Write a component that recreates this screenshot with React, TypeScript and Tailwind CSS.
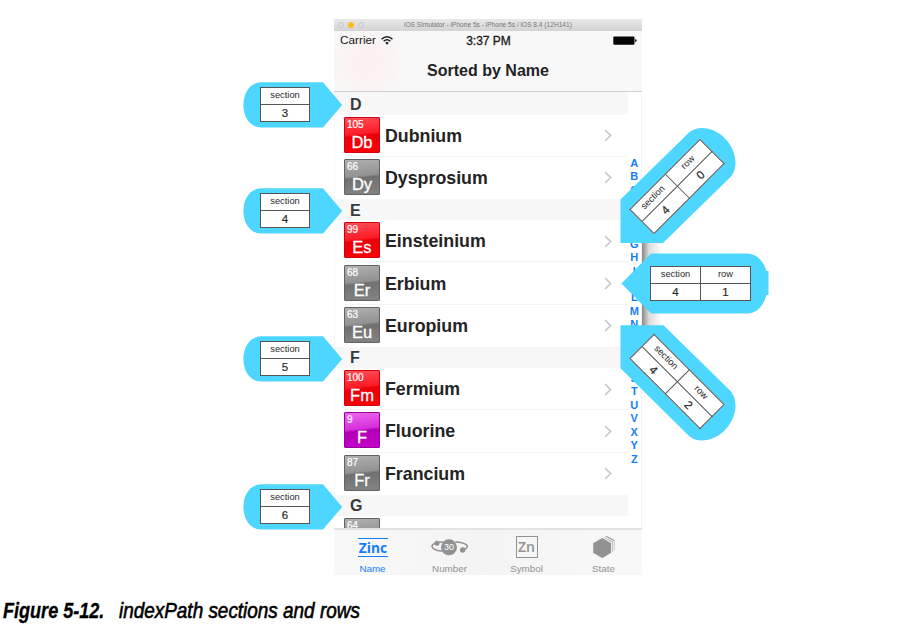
import React from "react";

type Tone = "red" | "gray" | "purple";
type Element = { n: number; sym: string; name: string; tone: Tone };
type Section = { letter: string; rows: Element[] };

const sections: Section[] = [
  {
    letter: "D",
    rows: [
      { n: 105, sym: "Db", name: "Dubnium", tone: "red" },
      { n: 66, sym: "Dy", name: "Dysprosium", tone: "gray" },
    ],
  },
  {
    letter: "E",
    rows: [
      { n: 99, sym: "Es", name: "Einsteinium", tone: "red" },
      { n: 68, sym: "Er", name: "Erbium", tone: "gray" },
      { n: 63, sym: "Eu", name: "Europium", tone: "gray" },
    ],
  },
  {
    letter: "F",
    rows: [
      { n: 100, sym: "Fm", name: "Fermium", tone: "red" },
      { n: 9, sym: "F", name: "Fluorine", tone: "purple" },
      { n: 87, sym: "Fr", name: "Francium", tone: "gray" },
    ],
  },
  { letter: "G", rows: [{ n: 64, sym: "", name: "", tone: "gray" }] },
];

const tones: Record<Tone, string> = {
  red: "border-[#d0000c] bg-[linear-gradient(174deg,#ff5058_0%,#fb1c26_46%,#ea000a_52%,#ff0008_100%)]",
  gray: "border-[#636363] bg-[linear-gradient(174deg,#b0b0b0_0%,#929292_46%,#707070_52%,#848484_100%)]",
  purple: "border-[#93009a] bg-[linear-gradient(174deg,#ec66ee_0%,#d630da_46%,#b000b6_52%,#c600cc_100%)]",
};

const letters = "ABCDEFGHIKLMNOPRSTUVXYZ".split("");

function Tile({ n, sym, tone }: Element) {
  return (
    <div className={`h-[36px] w-[36px] shrink-0 rounded-[1px] border text-white ${tones[tone]}`}>
      <div className="pl-[2px] text-[10px] leading-[14px] [-webkit-text-stroke:0.2px_white]">{n}</div>
      <div className="text-center text-[16.5px] leading-[20px] [-webkit-text-stroke:0.3px_white]">{sym}</div>
    </div>
  );
}

function Row({ item, last }: { item: Element; last: boolean }) {
  return (
    <div className="relative flex h-[42.2px] items-center pl-[9px] pr-[16px]">
      <div className="-mt-[2px]">
        <Tile {...item} />
      </div>
      <span className="ml-[5px] flex-1 text-[17.8px] leading-[22px] font-bold text-[#242424]">{item.name}</span>
      <svg width="8" height="13" viewBox="0 0 8 13" fill="none" stroke="#c8c8cc" strokeWidth="1.7">
        <path d="M1 1 L6.6 6.5 L1 12" />
      </svg>
      {!last && <div className="absolute bottom-0 left-[10px] right-0 h-px bg-[#f4f4f4]" />}
    </div>
  );
}

function Table({ head, body }: { head: string[]; body: string[] }) {
  return (
    <div className="flex border-l border-t border-[#555] bg-white text-[#2a2a2a]">
      {head.map((h, i) => (
        <div key={h} className="flex flex-1 flex-col">
          <div className="flex h-[17px] items-center justify-center border-b border-r border-[#555] text-[9.3px] leading-none">
            {h}
          </div>
          <div className="flex h-[17px] items-center justify-center border-b border-r border-[#555] pt-[2px] text-[11.5px] leading-none [-webkit-text-stroke:0.2px_#2a2a2a]">
            {body[i]}
          </div>
        </div>
      ))}
    </div>
  );
}

function SectionCallout({ place, value }: { place: string; value: string }) {
  return (
    <div className={`absolute left-[243px] h-[46px] w-[100px] ${place}`}>
      <svg className="absolute inset-0" width="100" height="46" viewBox="0 0 100 46">
        <path d="M18 .3 H80 L99.2 22.9 L80 45.6 H18 C6 45 .4 34 .4 23 C.4 12 6 1 18 .3Z" fill="#4dd6ff" />
      </svg>
      <div className="relative ml-[17px] mt-[5px] w-[50px]">
        <Table head={["section"]} body={[value]} />
      </div>
    </div>
  );
}

function TabItem({ label, active, children }: { label: string; active?: boolean; children: React.ReactNode }) {
  return (
    <div className={`flex w-[77px] flex-col items-center pt-[5px] ${active ? "text-[#147dfb]" : "text-[#929292]"}`}>
      <div className="flex h-[24px] items-center">{children}</div>
      <div className="mt-[4px] text-[9.8px] leading-[11px]">{label}</div>
    </div>
  );
}

export default function App() {
  return (
    <div className="relative h-[628px] w-[902px] overflow-hidden bg-white pt-[19px] font-['Liberation_Sans',Arial,sans-serif]">
      {/* Simulator window */}
      <div className="ml-[334px] flex h-[556px] w-[308px] flex-col">
        <div className="flex h-[12px] items-center bg-linear-to-b from-[#e9e9e9] to-[#d3d3d3] pl-[4px]">
          <div className="flex gap-[4px]">
            <div className="size-[6px] rounded-full border border-[#c9c9c9] bg-[#dedede]" />
            <div className="size-[6px] rounded-full bg-[#fdbc1e]" />
            <div className="size-[6px] rounded-full border border-[#c9c9c9] bg-[#dedede]" />
          </div>
          <div className="ml-[40px] whitespace-nowrap text-[6.6px] leading-[12px] text-[#767676]">
            iOS Simulator - iPhone 5s - iPhone 5s / iOS 8.4 (12H141)
          </div>
        </div>

        <div className="h-[61px] shrink-0 border-b border-[#cfcfcf] bg-[#f8f8f8] bg-[radial-gradient(circle_at_33px_32px,#fcefee_0px,#faf3f3_22px,#f8f8f8_42px)]">
          <div className="grid h-[19px] grid-cols-3 items-center pl-[6px] pr-[5px] text-[#1a1a1a]">
            <div className="flex items-center gap-[5px] text-[11.8px] leading-none">
              Carrier
              <svg width="12" height="9" viewBox="0 0 12 9" fill="none" stroke="#1a1a1a" strokeWidth="1.5">
                <path d="M.5 3.2 Q6 -1.6 11.5 3.2" />
                <path d="M2.6 5.3 Q6 2.2 9.4 5.3" />
                <path d="M4.2 6.7 Q6 5.2 7.8 6.7 L6 8.8Z" fill="#1a1a1a" stroke="none" />
              </svg>
            </div>
            <div className="whitespace-nowrap text-center text-[12px] leading-none [-webkit-text-stroke:0.3px_#1a1a1a]">
              3:37 PM
            </div>
            <svg className="justify-self-end" width="24" height="9" viewBox="0 0 24 9">
              <rect x=".3" y=".4" width="21.2" height="8.4" rx="1.2" fill="#050505" />
              <path d="M22.2 3 Q23.6 3.4 23.6 4.6 Q23.6 5.8 22.2 6.2Z" fill="#050505" />
            </svg>
          </div>
          <div className="pt-[11px] text-center text-[16px] leading-[20px] font-bold text-[#242424]">Sorted by Name</div>
        </div>

        <div className="flex min-h-0 flex-1 overflow-hidden border-r border-[#f3f3f3]">
          <div className="w-[293.5px] shrink-0 border-l border-[#f7f7f7]">
            {sections.map((s) => (
              <div key={s.letter}>
                <div
                  className={`flex items-center bg-[#f7f7f7] pl-[15px] text-[16px] leading-none font-bold text-[#3a3a3a] ${s.letter === "D" ? "h-[22.6px] pt-[3px]" : "h-[21.3px] pt-[2px]"}`}
                >
                  {s.letter}
                </div>
                {s.rows.map((r, i) => (
                  <Row key={r.n} item={r} last={i === s.rows.length - 1} />
                ))}
              </div>
            ))}
          </div>
          <div className="flex flex-1 flex-col items-center pt-[65px] text-[11px] font-bold text-[#147dfb]">
            {letters.map((l) => (
              <div key={l} className="h-[13.45px] shrink-0 leading-[13.45px]">
                {l}
              </div>
            ))}
          </div>
        </div>

        <div className="flex h-[47px] shrink-0 border-t-2 border-[#e2e2e2] bg-[#f8f8f8] bg-linear-to-r from-[#f8f8f8] via-[#f4f4f4] to-[#f8f8f8]">
          <TabItem label="Name" active>
            <div className="flex h-[19px] w-[30px] items-center justify-center border-y border-[#147dfb] font-['Open_Sans',sans-serif] text-[14.5px] leading-[17px] font-bold">
              <span className="scale-x-95">Zinc</span>
            </div>
          </TabItem>
          <TabItem label="Number">
            <svg width="40" height="22" viewBox="312 165 120 66" fill="none" stroke="#929292" strokeWidth="4.5">
              <path d="M352 183 C332 182 317 189 318 197 C319 204 334 210 350 211" />
              <path d="M388 183 C406 183 425 189 424 197 C423 202 416 206 406 208" />
              <circle cx="333" cy="187" r="7.5" fill="#929292" stroke="none" />
              <circle cx="410" cy="207" r="8" fill="#929292" stroke="none" />
              <circle cx="369" cy="199" r="24" fill="#929292" stroke="none" />
              <text x="369" y="208" textAnchor="middle" fontSize="27" fill="#fff" stroke="none">
                30
              </text>
            </svg>
          </TabItem>
          <TabItem label="Symbol">
            <div className="flex size-[22px] items-center justify-center border border-[#929292] font-['Open_Sans',sans-serif] text-[14px] leading-[20px] font-semibold">
              Zn
            </div>
          </TabItem>
          <TabItem label="State">
            <svg width="23" height="23" viewBox="800 166 69 69" fill="#929292" stroke="#f8f8f8" strokeWidth="3.5">
              <path d="M844 164 L869 177 V209 L844 224 L818 209 V177Z" />
              <path d="M838 168 L864 182 V214 L838 229 L811 214 V182Z" />
              <path d="M831 170 L859 186 V218 L831 234 L802 218 V186Z" />
            </svg>
          </TabItem>
        </div>
      </div>

      {/* Window shadow between the row callouts */}
      <div className="absolute left-[642px] top-[235px] h-[92px] w-[20px] bg-linear-to-r from-[#8a8a8a] via-[#dcdcdc] via-35% to-white" />

      {/* Section callouts */}
      <SectionCallout place="top-[81.5px]" value="3" />
      <SectionCallout place="top-[187.5px]" value="4" />
      <SectionCallout place="top-[335.5px]" value="5" />
      <SectionCallout place="top-[483.5px]" value="6" />

      {/* Row callouts */}
      <svg className="absolute left-[620px] top-[120px]" width="150" height="330" viewBox="620 120 150 330" fill="#4dd6ff">
        <path d="M620.5 199.5 L687 134.5 Q693 128 701 128 C721 128 735.5 146 735.5 163 Q735.5 173 728.5 179 L663 243 H620.5Z" />
        <path d="M620.5 368.2 L687 433.9 Q693 440.4 701 440.4 C721 440.4 735.5 422 735.5 405.4 Q735.5 395 728.5 389 L663.5 325.3 H620.5Z" />
        <path d="M621.5 283.5 L651 253.5 H747 C756 253.5 763 260 766.5 271 H768.5 V295 H766.5 C763 307 756 313.5 747 313.5 H651Z" />
      </svg>
      <div className="absolute left-[627px] top-[169px] w-[100px] -rotate-45">
        <Table head={["section", "row"]} body={["4", "0"]} />
      </div>
      <div className="absolute left-[650px] top-[266px] w-[101px]">
        <Table head={["section", "row"]} body={["4", "1"]} />
      </div>
      <div className="absolute left-[627px] top-[364px] w-[100px] rotate-45">
        <Table head={["section", "row"]} body={["4", "2"]} />
      </div>

      {/* Caption */}
      <div className="flex pl-[3px] pt-[23px] text-[21.5px] leading-[26px] whitespace-pre italic text-black">
        <div className="w-[116px] origin-left scale-x-[0.84] font-bold [-webkit-text-stroke:0.3px_black]">Figure 5-12.</div>
        <div className="origin-left scale-x-[0.88] [-webkit-text-stroke:0.6px_black]">indexPath sections and rows</div>
      </div>
    </div>
  );
}
